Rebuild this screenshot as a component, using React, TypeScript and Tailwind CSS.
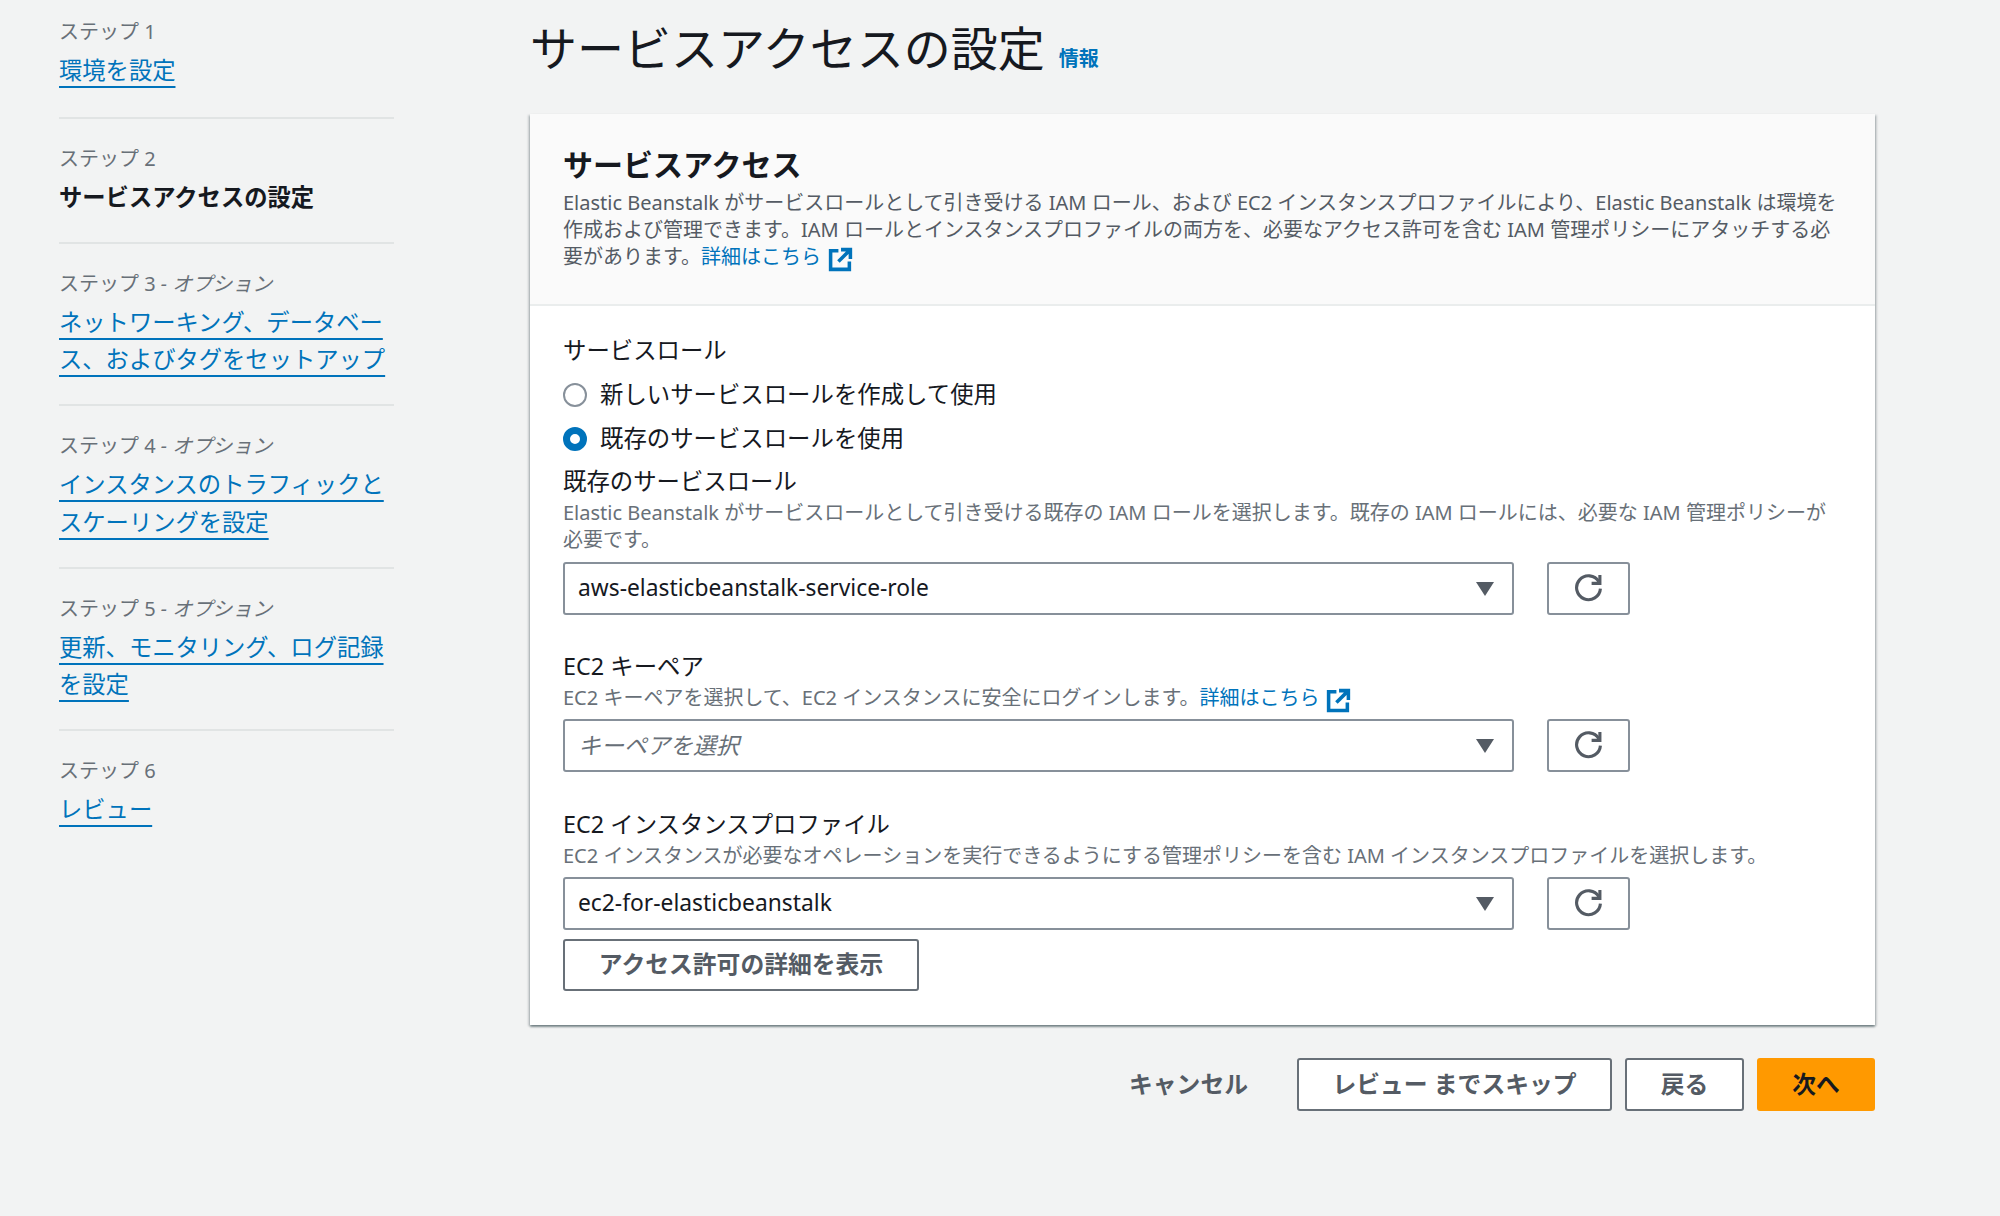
const FONT = "font-['Noto_Sans','Noto_Sans_CJK_JP',sans-serif]";

const STEPS: { label: string; option?: boolean; lines: string[]; current?: boolean }[] = [
  { label: "ステップ 1", lines: ["環境を設定"] },
  { label: "ステップ 2", lines: ["サービスアクセスの設定"], current: true },
  { label: "ステップ 3", option: true, lines: ["ネットワーキング、データベー", "ス、およびタグをセットアップ"] },
  { label: "ステップ 4", option: true, lines: ["インスタンスのトラフィックと", "スケーリングを設定"] },
  { label: "ステップ 5", option: true, lines: ["更新、モニタリング、ログ記録", "を設定"] },
  { label: "ステップ 6", lines: ["レビュー"] },
];

function ExternalIcon() {
  return (
    <svg viewBox="0 0 24 24" className="-my-[4px] ml-[7px] inline-block h-[25px] w-[25px] align-[-4px]" fill="none" stroke="#0073bb" strokeWidth="3.4">
      <path d="M10 3.5H2.5v18h18V14" />
      <path d="M12.5 2.5h9v9M21 3 10 14" />
    </svg>
  );
}

function RefreshIcon() {
  return (
    <svg viewBox="0 0 28 28" className="h-[29px] w-[29px] -translate-y-[1px]" fill="none" stroke="#545b64" strokeWidth="3">
      <path d="M24 8.5A11.5 11.5 0 1 0 25.5 15" />
      <path d="M25 2v8h-8" />
    </svg>
  );
}

function Caret() {
  return (
    <svg viewBox="0 0 18 14" className="h-[14px] w-[18px]" fill="#545b64">
      <path d="M0 0h18L9 14z" />
    </svg>
  );
}

function SelectRow({ value, placeholder, className }: { value: string; placeholder?: boolean; className?: string }) {
  return (
    <div className={`flex items-center gap-[33px] ${className ?? ""}`}>
      <div className="flex h-[53px] w-[951px] items-center justify-between rounded-[3px] border-2 border-[#87909a] bg-white pl-[13px] pr-[18px]">
        {placeholder ? (
          <span className="text-[23px] italic text-[#687078]">{value}</span>
        ) : (
          <span className="text-[22.8px] text-[#16191f]">{value}</span>
        )}
        <Caret />
      </div>
      <button className="flex h-[53px] w-[83px] items-center justify-center rounded-[3px] border-2 border-[#87909a] bg-white">
        <RefreshIcon />
      </button>
    </div>
  );
}

function Radio({ checked, label }: { checked?: boolean; label: string }) {
  return (
    <div className="flex h-[44px] items-center gap-[13px]">
      {checked ? (
        <span className="h-[24px] w-[24px] rounded-full border-[7px] border-[#0073bb] bg-white" />
      ) : (
        <span className="h-[24px] w-[24px] rounded-full border-2 border-[#87909a] bg-white" />
      )}
      <span className="text-[23.4px] text-[#16191f]">{label}</span>
    </div>
  );
}

function FieldLabel({ children }: { children: React.ReactNode }) {
  return <p className="h-[35px] text-[23.4px] leading-[34px] text-[#16191f]">{children}</p>;
}

function Hint({ children }: { children: React.ReactNode }) {
  return <p className="whitespace-nowrap text-[20px] leading-[27px] text-[#687078]">{children}</p>;
}

export default function App() {
  return (
    <div className={`flex min-h-[1216px] bg-[#f2f3f3] ${FONT}`}>
      <nav className="ml-[59px] w-[335px] pt-[15px]">
        {STEPS.map((s, i) => (
          <div
            key={s.label}
            className={i === 0 ? "" : i === 1 ? "mt-[27px] border-t-2 border-[#e1e4e4] pt-[23px]" : "mt-[25.5px] border-t-2 border-[#e1e4e4] pt-[23px]"}
          >
            <p className="h-[34px] text-[20px] leading-[34px] text-[#687078]">
              {s.label}
              {s.option && <i> - オプション</i>}
            </p>
            <div className="mt-[3px]">
              {s.lines.map((line) =>
                s.current ? (
                  <p key={line} className="text-[23.3px] font-bold leading-[37.5px] text-[#16191f]">{line}</p>
                ) : (
                  <p key={line} className="whitespace-nowrap text-[23.3px] leading-[37.5px]">
                    <a className="text-[#0073bb] underline decoration-2 underline-offset-[7px] [text-decoration-skip-ink:none]">{line}</a>
                  </p>
                )
              )}
            </div>
          </div>
        ))}
      </nav>

      <main className="ml-[136px] w-[1345px]">
        <div className="flex h-[114px] items-start">
          <h1 className="mt-[13px] text-[47px] leading-[70px] text-[#16191f]">サービスアクセスの設定</h1>
          <a className="ml-[14px] mt-[43px] text-[20px] font-bold leading-[32px] text-[#0073bb]">情報</a>
        </div>

        <section className="bg-white shadow-[0_2px_2px_rgba(0,28,36,0.4),2px_1px_2px_rgba(0,28,36,0.15),-2px_1px_2px_rgba(0,28,36,0.15)]">
          <header className="h-[192px] border-b-2 border-[#eaeded] bg-[#fafafa] px-[33px] pt-[29px]">
            <h2 className="text-[30px] font-bold leading-[44px] text-[#16191f]">サービスアクセス</h2>
            <p className="mt-[2px] whitespace-nowrap text-[20px] leading-[27px] text-[#545b64]">
              Elastic Beanstalk がサービスロールとして引き受ける IAM ロール、および EC2 インスタンスプロファイルにより、Elastic Beanstalk は環境を
              <br />
              作成および管理できます。IAM ロールとインスタンスプロファイルの両方を、必要なアクセス許可を含む IAM 管理ポリシーにアタッチする必
              <br />
              要があります。<a className="text-[#0073bb]">詳細はこちら<ExternalIcon /></a>
            </p>
          </header>

          <div className="h-[719px] px-[33px] pt-[27px]">
            <FieldLabel>サービスロール</FieldLabel>
            <div className="mt-[5px]">
              <Radio label="新しいサービスロールを作成して使用" />
              <Radio checked label="既存のサービスロールを使用" />
            </div>
            <div className="mt-[3px]">
              <FieldLabel>既存のサービスロール</FieldLabel>
              <Hint>
                Elastic Beanstalk がサービスロールとして引き受ける既存の IAM ロールを選択します。既存の IAM ロールには、必要な IAM 管理ポリシーが
                <br />
                必要です。
              </Hint>
            </div>
            <SelectRow className="mt-[9px]" value="aws-elasticbeanstalk-service-role" />

            <div className="mt-[34px]">
              <FieldLabel>EC2 キーペア</FieldLabel>
              <Hint>
                EC2 キーペアを選択して、EC2 インスタンスに安全にログインします。<a className="text-[#0073bb]">詳細はこちら<ExternalIcon /></a>
              </Hint>
            </div>
            <SelectRow className="mt-[8px]" value="キーペアを選択" placeholder />

            <div className="mt-[35px]">
              <FieldLabel>EC2 インスタンスプロファイル</FieldLabel>
              <Hint>EC2 インスタンスが必要なオペレーションを実行できるようにする管理ポリシーを含む IAM インスタンスプロファイルを選択します。</Hint>
            </div>
            <SelectRow className="mt-[8px]" value="ec2-for-elasticbeanstalk" />

            <button className="mt-[9px] h-[52px] w-[356px] rounded-[3px] border-2 border-[#687078] bg-white text-[23.8px] font-bold text-[#545b64]">
              アクセス許可の詳細を表示
            </button>
          </div>
        </section>

        <div className="mt-[33px] flex items-center justify-end">
          <span className="mr-[49px] text-[23.8px] font-bold text-[#545b64]">キャンセル</span>
          <button className="h-[53px] w-[315px] rounded-[3px] border-2 border-[#687078] bg-white text-[23.8px] font-bold text-[#545b64]">
            レビュー までスキップ
          </button>
          <button className="ml-[13px] h-[53px] w-[119px] rounded-[3px] border-2 border-[#687078] bg-white text-[23.8px] font-bold text-[#545b64]">
            戻る
          </button>
          <button className="ml-[13px] h-[53px] w-[118px] rounded-[3px] bg-[#ff9900] text-[23.8px] font-bold text-[#16191f]">
            次へ
          </button>
        </div>
      </main>
    </div>
  );
}
